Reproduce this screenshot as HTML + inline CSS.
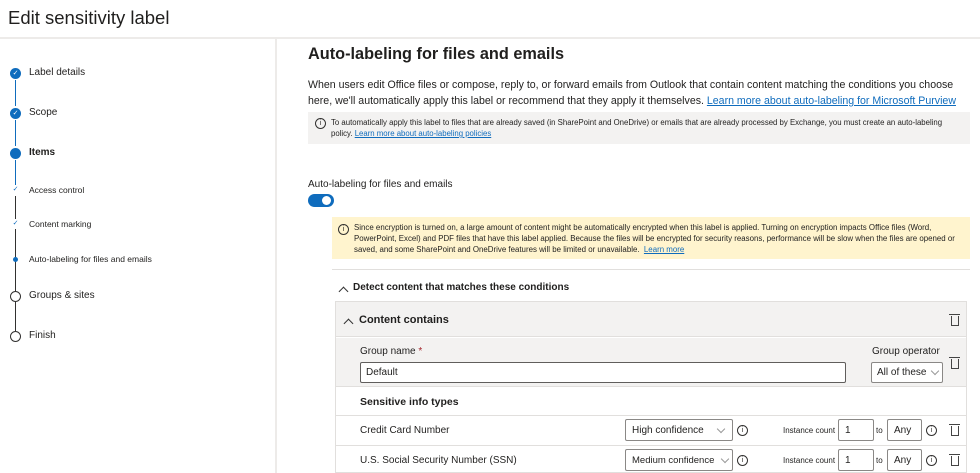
<!DOCTYPE html><html><head><style>
*{box-sizing:border-box;margin:0;padding:0}
body{width:980px;height:473px;overflow:hidden;background:#fff;font-family:"Liberation Sans",sans-serif;color:#201f1e;position:relative}
.a{position:absolute;white-space:nowrap}
.c{position:absolute;border-radius:50%}
.sel,.inp{position:absolute;border:1px solid #8a8886;border-radius:2px;background:#fff;font-size:10px;padding:5px 6px;height:22px}
.ic{position:absolute;width:11px;height:11px;border:1px solid #323130;border-radius:50%;font-size:7px;text-align:center;line-height:9px}
.tr{position:absolute;width:8px;height:10px;border:1.3px solid #444;border-top:none}
.tr:before{content:"";position:absolute;left:-3px;top:-2px;width:11px;height:1.3px;background:#444}
.chev{position:absolute;width:7px;height:7px;border-left:1.2px solid #333;border-top:1.2px solid #333;transform:rotate(45deg)}
.dd{position:absolute;width:6px;height:6px;border-right:1px solid #999;border-bottom:1px solid #999;transform:rotate(45deg)}
</style></head><body>
<div class="a" style="left:8px;top:7px;font-size:18.5px">Edit sensitivity label</div>
<div class="a" style="left:0;top:37px;width:980px;height:2px;background:#edebe9"></div>
<div class="a" style="left:275px;top:39px;width:2px;height:434px;background:#edebe9"></div>
<div class="a" style="left:15px;top:80px;width:1px;height:26px;background:#0f6cbd"></div>
<div class="a" style="left:15px;top:120px;width:1px;height:26px;background:#0f6cbd"></div>
<div class="a" style="left:15px;top:160px;width:1px;height:25px;background:#0f6cbd"></div>
<div class="a" style="left:15px;top:196px;width:1px;height:135px;background:#323130"></div>
<div class="c" style="left:10px;top:68px;width:11px;height:11px;background:#0f6cbd;color:#fff;font-size:7px;text-align:center;line-height:11px">✓</div>
<div class="c" style="left:10px;top:108px;width:11px;height:11px;background:#0f6cbd;color:#fff;font-size:7px;text-align:center;line-height:11px">✓</div>
<div class="c" style="left:10px;top:148px;width:11px;height:11px;background:#0f6cbd"></div>
<div class="a" style="left:11px;top:185px;width:9px;height:10px;font-size:7px;color:#0f6cbd;background:#fff;text-align:center">✓</div>
<div class="a" style="left:11px;top:219px;width:9px;height:10px;font-size:7px;color:#0f6cbd;background:#fff;text-align:center">✓</div>
<div class="c" style="left:13px;top:257px;width:5px;height:5px;background:#0f6cbd"></div>
<div class="c" style="left:10px;top:291px;width:11px;height:11px;border:1.5px solid #323130;background:#fff"></div>
<div class="c" style="left:10px;top:331px;width:11px;height:11px;border:1.5px solid #323130;background:#fff"></div>
<div class="a" style="left:29px;top:67px;font-size:10px">Label details</div>
<div class="a" style="left:29px;top:107px;font-size:10px">Scope</div>
<div class="a" style="left:29px;top:147px;font-size:10px;font-weight:bold">Items</div>
<div class="a" style="left:29px;top:185px;font-size:8.5px">Access control</div>
<div class="a" style="left:29px;top:219px;font-size:8.5px">Content marking</div>
<div class="a" style="left:29px;top:254px;font-size:8.5px">Auto-labeling for files and emails</div>
<div class="a" style="left:29px;top:290px;font-size:10px">Groups &amp; sites</div>
<div class="a" style="left:29px;top:330px;font-size:10px">Finish</div>
<div class="a" style="left:308px;top:45px;font-size:16.3px;font-weight:bold">Auto-labeling for files and emails</div>
<div class="a" style="left:308px;top:77px;font-size:10.6px;line-height:16px">When users edit Office files or compose, reply to, or forward emails from Outlook that contain content matching the conditions you choose<br>here, we'll automatically apply this label or recommend that they apply it themselves. <span style="color:#0f6cbd;text-decoration:underline">Learn more about auto-labeling for Microsoft Purview</span></div>
<div class="a" style="left:308px;top:112px;width:662px;height:32px;background:#f3f2f1"></div>
<div class="ic" style="left:315px;top:118px">i</div>
<div class="a" style="left:331px;top:117px;font-size:7.8px;line-height:11px">To automatically apply this label to files that are already saved (in SharePoint and OneDrive) or emails that are already processed by Exchange, you must create an auto-labeling<br>policy. <span style="color:#0f6cbd;text-decoration:underline">Learn more about auto-labeling policies</span></div>
<div class="a" style="left:308px;top:179px;font-size:10px">Auto-labeling for files and emails</div>
<div class="a" style="left:308px;top:194px;width:26px;height:13px;border-radius:7px;background:#0f6cbd"></div>
<div class="c" style="left:322px;top:196px;width:9px;height:9px;background:#fff"></div>
<div class="a" style="left:332px;top:217px;width:638px;height:42px;background:#fff4ce"></div>
<div class="ic" style="left:338px;top:224px">i</div>
<div class="a" style="left:354px;top:222px;font-size:7.9px;line-height:11px">Since encryption is turned on, a large amount of content might be automatically encrypted when this label is applied. Turning on encryption impacts Office files (Word,<br>PowerPoint, Excel) and PDF files that have this label applied. Because the files will be encrypted for security reasons, performance will be slow when the files are opened or<br>saved, and some SharePoint and OneDrive features will be limited or unavailable. &nbsp;<span style="color:#0f6cbd;text-decoration:underline">Learn more</span></div>
<div class="a" style="left:332px;top:269px;width:638px;height:1px;background:#e1dfdd"></div>
<div class="chev" style="left:340px;top:288px"></div>
<div class="a" style="left:353px;top:282px;font-size:10px;font-weight:bold">Detect content that matches these conditions</div>
<div class="a" style="left:335px;top:301px;width:632px;height:172px;border:1px solid #e1dfdd;background:#fff"></div>
<div class="a" style="left:336px;top:302px;width:630px;height:35px;background:#f3f2f1;border-bottom:1px solid #e1dfdd"></div>
<div class="chev" style="left:345px;top:320px"></div>
<div class="a" style="left:359px;top:314px;font-size:11px;font-weight:bold">Content contains</div>
<div class="tr" style="left:951px;top:316px"></div>
<div class="a" style="left:336px;top:338px;width:630px;height:49px;background:#f3f2f1;border-bottom:1px solid #e1dfdd"></div>
<div class="a" style="left:360px;top:346px;font-size:10px">Group name <span style="color:#a4262c">*</span></div>
<div class="inp" style="left:360px;top:362px;width:486px;height:21px;border-color:#605e5c;padding:4px 5px">Default</div>
<div class="a" style="left:872px;top:346px;font-size:10px">Group operator</div>
<div class="sel" style="left:871px;top:362px;width:72px;height:21px;padding:4px 5px">All of these</div>
<div class="dd" style="left:932px;top:368px"></div>
<div class="tr" style="left:951px;top:359px"></div>
<div class="a" style="left:360px;top:396px;font-size:10.5px;font-weight:bold">Sensitive info types</div>
<div class="a" style="left:336px;top:415px;width:630px;height:1px;background:#e1dfdd"></div>
<div class="a" style="left:360px;top:425px;font-size:10px">Credit Card Number</div>
<div class="sel" style="left:625px;top:419px;width:108px">High confidence</div>
<div class="dd" style="left:718px;top:426px"></div>
<div class="ic" style="left:737px;top:425px">i</div>
<div class="a" style="left:783px;top:426px;font-size:8px">Instance count</div>
<div class="inp" style="left:838px;top:419px;width:36px">1</div>
<div class="a" style="left:876px;top:426px;font-size:8px">to</div>
<div class="inp" style="left:887px;top:419px;width:35px">Any</div>
<div class="ic" style="left:926px;top:425px">i</div>
<div class="tr" style="left:951px;top:426px"></div>
<div class="a" style="left:336px;top:445px;width:630px;height:1px;background:#e1dfdd"></div>
<div class="a" style="left:360px;top:455px;font-size:10px">U.S. Social Security Number (SSN)</div>
<div class="sel" style="left:625px;top:449px;width:108px;font-size:9.5px">Medium confidence</div>
<div class="dd" style="left:722px;top:456px"></div>
<div class="ic" style="left:737px;top:455px">i</div>
<div class="a" style="left:783px;top:456px;font-size:8px">Instance count</div>
<div class="inp" style="left:838px;top:449px;width:36px">1</div>
<div class="a" style="left:876px;top:456px;font-size:8px">to</div>
<div class="inp" style="left:887px;top:449px;width:35px">Any</div>
<div class="ic" style="left:926px;top:455px">i</div>
<div class="tr" style="left:951px;top:456px"></div>
</body></html>
